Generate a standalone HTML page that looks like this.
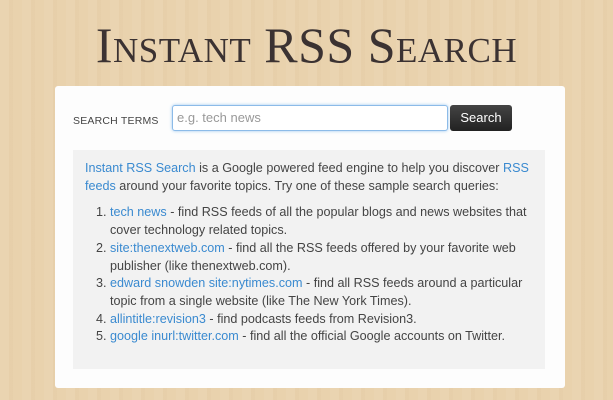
<!DOCTYPE html>
<html><head><style>
body{margin:0;width:613px;height:400px;overflow:hidden;background:#e9d2ad;background-image:repeating-linear-gradient(90deg,rgba(255,255,255,.05) 0 9px,rgba(160,110,60,.03) 9px 13px,rgba(255,255,255,0) 13px 22px);font-family:"Liberation Sans",sans-serif;position:relative}
h1{position:absolute;left:0;width:613px;top:17px;margin:0;text-align:center;font-family:"Liberation Serif",serif;font-variant:small-caps;font-weight:normal;font-size:50px;line-height:56px;color:#3b3232;letter-spacing:.5px}
.panel{position:absolute;left:55px;top:86px;width:510px;height:302px;background:#fdfdfd;border-radius:3px}
.lbl{position:absolute;left:18px;top:29px;font-size:10.5px;color:#444;letter-spacing:.2px}
.inp{position:absolute;left:117px;top:19px;width:270px;height:24px;border:1px solid #8cbbe8;border-radius:3px;box-shadow:0 0 3px #9cc8f0;background:#fff;font-size:13px;color:#999;line-height:24px;padding-left:4px}
.btn{position:absolute;left:395px;top:19px;width:62px;height:26px;background:linear-gradient(#444,#222);border-radius:3px;color:#fff;font-size:13px;line-height:26px;text-align:center}
.box{position:absolute;left:18px;top:64px;width:472px;height:219px;background:#f2f2f2;font-size:12.6px;color:#444;line-height:17.7px}
.box p{margin:10px 12px 0 12px}
a{color:#3a8ad0;text-decoration:none}
ol{margin:9px 0 0 0;padding-left:37px;padding-right:10px}
</style></head><body>
<h1>Instant RSS Search</h1>
<div class="panel">
<div class="lbl">SEARCH TERMS</div>
<div class="inp">e.g. tech news</div>
<div class="btn">Search</div>
<div class="box">
<p><a>Instant RSS Search</a> is a Google powered feed engine to help you discover <a>RSS feeds</a> around your favorite topics. Try one of these sample search queries:</p>
<ol>
<li><a>tech news</a> - find RSS feeds of all the popular blogs and news websites that cover technology related topics.</li>
<li><a>site:thenextweb.com</a> - find all the RSS feeds offered by your favorite web publisher (like thenextweb.com).</li>
<li><a>edward snowden site:nytimes.com</a> - find all RSS feeds around a particular topic from a single website (like The New York Times).</li>
<li><a>allintitle:revision3</a> - find podcasts feeds from Revision3.</li>
<li><a>google inurl:twitter.com</a> - find all the official Google accounts on Twitter.</li>
</ol>
</div>
</div>
</body></html>
